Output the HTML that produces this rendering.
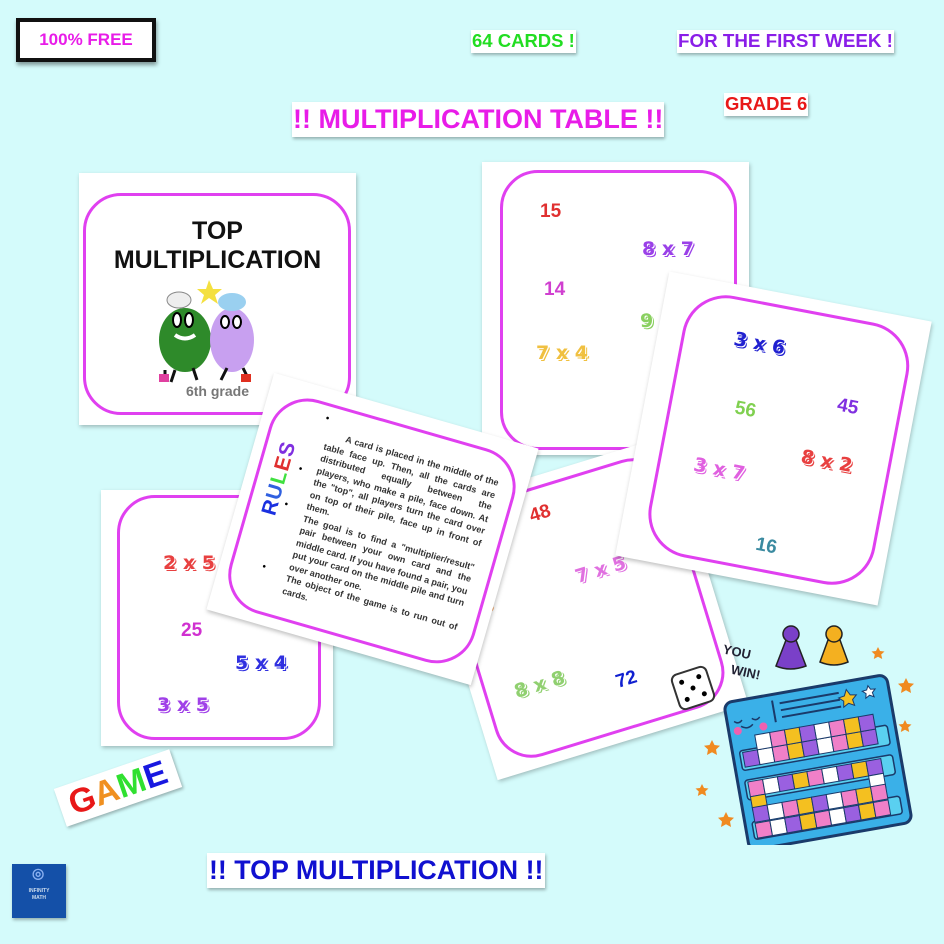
<!DOCTYPE html>
<html><head><meta charset="utf-8"><style>
*{margin:0;padding:0;box-sizing:border-box}
body{width:944px;height:944px;background:#d4fbfb;position:relative;overflow:hidden;font-family:"Liberation Sans",sans-serif}
.a{position:absolute}
.lbl{position:absolute;background:#fff;font-weight:bold;box-shadow:1px 2px 3px rgba(0,0,0,.3);white-space:nowrap;line-height:1}
.card{position:absolute;background:#fff;box-shadow:1px 2px 4px rgba(0,0,0,.25)}
.in{position:absolute;border:3.5px solid #e040f0;border-radius:38px}
.n{position:absolute;font-weight:bold;font-size:19px;white-space:nowrap;line-height:1}
.o{font-family:"DejaVu Sans",sans-serif;font-weight:bold;color:var(--c);text-shadow:1px 1px 0 #fff,2px 2px 0 var(--c)}
</style></head><body>

<div class="a" style="left:16px;top:18px;width:140px;height:44px;border:4px solid #111;background:#fff;box-shadow:1px 3px 4px rgba(0,0,0,.4);color:#e81ce8;font-weight:bold;font-size:17px;text-align:center;line-height:36px">100% FREE</div>
<div class="lbl" style="left:471px;top:30px;padding:2px 1px;font-size:18.5px;color:#22dd22">64 CARDS !</div>
<div class="lbl" style="left:677px;top:30px;padding:2px 1px;font-size:18.8px;color:#8a1ee8">FOR THE FIRST WEEK !</div>
<div class="lbl" style="left:724px;top:93px;padding:2px 1px;font-size:18.5px;color:#e81818">GRADE 6</div>
<div class="lbl" style="left:292px;top:102px;padding:4px 1px;font-size:27px;color:#e81ce8">!! MULTIPLICATION TABLE !!</div>

<!-- top-left card -->
<div class="card" style="left:79px;top:173px;width:277px;height:252px">
 <div class="in" style="left:4px;top:20px;width:268px;height:222px"></div>
 <div class="a" style="left:0;top:44px;width:277px;text-align:center;font-weight:bold;font-size:25px;line-height:29px;color:#111">TOP<br>MULTIPLICATION</div>
 <svg class="a" style="left:78px;top:107px" width="120" height="105" viewBox="0 0 120 105">
  <path d="M52 0 L56 9 L65 9 L58 15 L61 24 L52 18 L44 24 L47 15 L40 9 L49 9Z" fill="#f4e040"/>
  <ellipse cx="28" cy="60" rx="26" ry="32" fill="#2e8a2a"/>
  <ellipse cx="75" cy="60" rx="22" ry="32" fill="#c8a0f0"/>
  <ellipse cx="22" cy="20" rx="12" ry="8" fill="#eee" stroke="#888"/>
  <ellipse cx="75" cy="22" rx="14" ry="9" fill="#9ad0f0"/>
  <ellipse cx="20" cy="40" rx="4" ry="7" fill="#fff" stroke="#000" stroke-width="2"/>
  <ellipse cx="32" cy="40" rx="4" ry="7" fill="#fff" stroke="#000" stroke-width="2"/>
  <ellipse cx="68" cy="42" rx="4" ry="6" fill="#fff" stroke="#000" stroke-width="2"/>
  <ellipse cx="80" cy="42" rx="4" ry="6" fill="#fff" stroke="#000" stroke-width="2"/>
  <path d="M18 55 Q28 62 38 55" stroke="#fff" stroke-width="4" fill="none"/>
  <path d="M8 90 l0 12 M18 90 l-4 12 M36 88 l4 12 M70 88 l-6 12 M86 88 l6 12" stroke="#111" stroke-width="3"/>
  <rect x="2" y="94" width="10" height="8" fill="#e040a0"/><rect x="84" y="94" width="10" height="8" fill="#e03020"/>
 </svg>
 <div class="a" style="left:0;top:210px;width:277px;text-align:center;font-weight:bold;font-size:14px;color:#777">6th grade</div>
</div>

<!-- top-right card -->
<div class="card" style="left:482px;top:162px;width:267px;height:293px">
 <div class="in" style="left:18px;top:8px;width:237px;height:280px"></div>
 <div class="n" style="left:58px;top:40px;color:#e03030">15</div>
 <div class="n o" style="left:160px;top:78px;--c:#9a40e8">8 x 7</div>
 <div class="n" style="left:62px;top:118px;color:#d040d0">14</div>
 <div class="n o" style="left:158px;top:150px;--c:#8ad060">9</div>
 <div class="n o" style="left:54px;top:182px;--c:#f0c040">7 x 4</div>
</div>

<!-- bottom-left card -->
<div class="card" style="left:101px;top:490px;width:232px;height:256px">
 <div class="in" style="left:16px;top:5px;width:204px;height:245px"></div>
 <div class="n o" style="left:62px;top:64px;--c:#e84040">2 x 5</div>
 <div class="n" style="left:80px;top:131px;color:#d030d0">25</div>
 <div class="n o" style="left:134px;top:164px;--c:#3030e0">5 x 4</div>
 <div class="n o" style="left:56px;top:206px;--c:#a040e8">3 x 5</div>
</div>

<!-- bottom-middle card -->
<div class="card" style="left:451px;top:468px;width:262px;height:280px;transform:rotate(-17deg)">
 <div class="in" style="left:12px;top:10px;width:238px;height:260px"></div>
 <div class="n" style="left:108px;top:28px;color:#e03030">48</div>
 <div class="n o" style="left:14px;top:100px;--c:#f09040">x 3</div>
 <div class="n o" style="left:134px;top:100px;--c:#e070e0">7 x 5</div>
 <div class="n o" style="left:42px;top:192px;--c:#90d070">8 x 8</div>
 <div class="n" style="left:142px;top:212px;color:#1020d0">72</div>
</div>

<!-- right tilted card -->
<div class="card" style="left:640px;top:294px;width:267px;height:289px;transform:rotate(10.8deg)">
 <div class="in" style="left:24px;top:12px;width:230px;height:266px;border-radius:44px"></div>
 <div class="n o" style="left:76px;top:45px;--c:#2020d0">3 x 6</div>
 <div class="n" style="left:190px;top:90px;color:#8030e0">45</div>
 <div class="n" style="left:90px;top:112px;color:#80d050">56</div>
 <div class="n o" style="left:164px;top:148px;--c:#e84040">8 x 2</div>
 <div class="n o" style="left:60px;top:176px;--c:#e060e0">3 x 7</div>
 <div class="n" style="left:136px;top:242px;color:#3a8aa0">16</div>
</div>

<!-- rules card -->
<div class="card" style="left:235px;top:406px;width:275px;height:246px;transform:rotate(16deg)">
 <div class="in" style="left:10px;top:14px;width:255px;height:222px;border-radius:40px"></div>
 <div class="a" style="left:-4px;top:88px;transform:rotate(-90deg);font-weight:bold;font-size:21px;letter-spacing:1px"><span style="color:#1a30e0">R</span><span style="color:#3060e0">U</span><span style="color:#40e040">L</span><span style="color:#e03030">E</span><span style="color:#8030e0">S</span></div>
 <div class="a" style="left:62px;top:24px;font-size:10px;color:#000">•</div>
 <div class="a" style="left:50px;top:80px;font-size:10px;color:#000">•</div>
 <div class="a" style="left:46px;top:118px;font-size:10px;color:#000">•</div>
 <div class="a" style="left:42px;top:184px;font-size:10px;color:#000">•</div>
 <div class="a" style="left:68px;top:38px;width:178px;font-size:9px;font-weight:bold;color:#333;line-height:12.5px;text-align:justify">&nbsp;&nbsp;&nbsp;&nbsp;&nbsp;&nbsp;A card is placed in the middle of the table face up. Then, all the cards are distributed &nbsp;equally &nbsp;between &nbsp;the players, who make a pile, face down. At the "top", all players turn the card over on top of their pile, face up in front of them.<br>The goal is to find a "multiplier/result" pair between your own card and the middle card. If you have found a pair, you put your card on the middle pile and turn over another one.<br>The object of the game is to run out of cards.</div>
</div>

<!-- game board art -->
<svg class="a" style="left:660px;top:615px" width="284" height="230" viewBox="660 615 284 230">
 <g transform="rotate(-18 693 688)"><rect x="675" y="670" width="36" height="36" rx="6" fill="#fff" stroke="#333" stroke-width="2"/>
 <circle cx="684" cy="679" r="2.5"/><circle cx="702" cy="697" r="2.5"/><circle cx="693" cy="688" r="2.5"/><circle cx="702" cy="679" r="2.5"/><circle cx="684" cy="697" r="2.5"/></g>
 <text x="722" y="656" font-family="Liberation Sans" font-weight="bold" font-size="13" fill="#223" transform="rotate(12 735 656)">YOU</text>
 <text x="730" y="676" font-family="Liberation Sans" font-weight="bold" font-size="13" fill="#223" transform="rotate(12 742 676)">WIN!</text>
 <path d="M786 640 L776 666 Q790 672 806 666 L796 640Z" fill="#7a40c8" stroke="#222" stroke-width="1.5"/><circle cx="791" cy="634" r="8" fill="#7a40c8" stroke="#222" stroke-width="1.5"/>
 <path d="M828 640 L820 662 Q834 668 848 662 L840 640Z" fill="#f4b020" stroke="#222" stroke-width="1.5"/><circle cx="834" cy="634" r="8" fill="#f4b020" stroke="#222" stroke-width="1.5"/>
 <g fill="#f08a20">
  <path d="M878 647l2 4 4.5.5-3.3 3 1 4.5-4.2-2.3-4.2 2.3 1-4.5-3.3-3 4.5-.5z"/>
  <path d="M906 678l2.5 5 5.5.7-4 3.8 1 5.5-5-2.7-5 2.7 1-5.5-4-3.8 5.5-.7z"/>
  <path d="M905 720l2 4 4.5.5-3.3 3 1 4.5-4.2-2.3-4.2 2.3 1-4.5-3.3-3 4.5-.5z"/>
  <path d="M712 740l2.5 5 5.5.7-4 3.8 1 5.5-5-2.7-5 2.7 1-5.5-4-3.8 5.5-.7z"/>
  <path d="M702 784l2 4 4.5.5-3.3 3 1 4.5-4.2-2.3-4.2 2.3 1-4.5-3.3-3 4.5-.5z"/>
  <path d="M726 812l2.5 5 5.5.7-4 3.8 1 5.5-5-2.7-5 2.7 1-5.5-4-3.8 5.5-.7z"/>
 </g>
 <g transform="rotate(-10 815 760)">
  <rect x="735" y="688" width="165" height="150" rx="8" fill="#3ab0e8" stroke="#1a3a6a" stroke-width="3"/>
  <path d="M790 698 h60 M790 705 h60 M790 712 h60 M783 694 v22" stroke="#1a3a6a" stroke-width="2"/>
  <path d="M858 696l3 6 6 1-4.5 4 1 6-5.5-3-5.5 3 1-6-4.5-4 6-1z" fill="#f4c020" stroke="#1a3a6a"/>
  <path d="M880 696l2 4 4.5.5-3.3 3 1 4.5-4.2-2.3-4.2 2.3 1-4.5-3.3-3 4.5-.5z" fill="#fff" stroke="#1a3a6a"/>
  <path d="M742 708 q4 4 8 0 M760 708 q4 4 8 0 M748 714 q6 5 12 0" stroke="#1a3a6a" stroke-width="1.5" fill="none"/>
  <circle cx="744" cy="718" r="4" fill="#f060b0"/><circle cx="770" cy="718" r="4" fill="#f060b0"/>
  <rect x="742" y="738" width="150" height="20" rx="3" fill="#5ad0f0" stroke="#1a3a6a" stroke-width="1.5"/>
  <rect x="742" y="768" width="150" height="20" rx="3" fill="#5ad0f0" stroke="#1a3a6a" stroke-width="1.5"/>
  <rect x="742" y="810" width="150" height="18" rx="3" fill="#5ad0f0" stroke="#1a3a6a" stroke-width="1.5"/>
  <g stroke="#1a3a6a" stroke-width="1">
   <rect x="745" y="740" width="15" height="15" fill="#9a60e0"/><rect x="760" y="740" width="15" height="15" fill="#fff"/><rect x="775" y="740" width="15" height="15" fill="#f080c8"/><rect x="790" y="740" width="15" height="15" fill="#f4c020"/><rect x="805" y="740" width="15" height="15" fill="#9a60e0"/><rect x="820" y="740" width="15" height="15" fill="#fff"/><rect x="835" y="740" width="15" height="15" fill="#f080c8"/><rect x="850" y="740" width="15" height="15" fill="#f4c020"/><rect x="865" y="740" width="15" height="15" fill="#9a60e0"/>
   <rect x="865" y="725" width="15" height="15" fill="#9a60e0"/><rect x="850" y="725" width="15" height="15" fill="#f4c020"/><rect x="835" y="725" width="15" height="15" fill="#f080c8"/><rect x="820" y="725" width="15" height="15" fill="#fff"/><rect x="805" y="725" width="15" height="15" fill="#9a60e0"/><rect x="790" y="725" width="15" height="15" fill="#f4c020"/><rect x="775" y="725" width="15" height="15" fill="#f080c8"/><rect x="760" y="725" width="15" height="15" fill="#fff"/>
   <rect x="745" y="770" width="15" height="15" fill="#f080c8"/><rect x="760" y="770" width="15" height="15" fill="#fff"/><rect x="775" y="770" width="15" height="15" fill="#9a60e0"/><rect x="790" y="770" width="15" height="15" fill="#f4c020"/><rect x="805" y="770" width="15" height="15" fill="#f080c8"/><rect x="820" y="770" width="15" height="15" fill="#fff"/><rect x="835" y="770" width="15" height="15" fill="#9a60e0"/><rect x="850" y="770" width="15" height="15" fill="#f4c020"/><rect x="865" y="770" width="15" height="15" fill="#9a60e0"/>
   <rect x="745" y="785" width="15" height="15" fill="#f4c020"/><rect x="865" y="785" width="15" height="15" fill="#fff"/>
   <rect x="745" y="796" width="15" height="15" fill="#9a60e0"/><rect x="760" y="796" width="15" height="15" fill="#fff"/><rect x="775" y="796" width="15" height="15" fill="#f080c8"/><rect x="790" y="796" width="15" height="15" fill="#f4c020"/><rect x="805" y="796" width="15" height="15" fill="#9a60e0"/><rect x="820" y="796" width="15" height="15" fill="#fff"/><rect x="835" y="796" width="15" height="15" fill="#f080c8"/><rect x="850" y="796" width="15" height="15" fill="#f4c020"/><rect x="865" y="796" width="15" height="15" fill="#f080c8"/>
   <rect x="745" y="812" width="15" height="15" fill="#f080c8"/><rect x="760" y="812" width="15" height="15" fill="#fff"/><rect x="775" y="812" width="15" height="15" fill="#9a60e0"/><rect x="790" y="812" width="15" height="15" fill="#f4c020"/><rect x="805" y="812" width="15" height="15" fill="#f080c8"/><rect x="820" y="812" width="15" height="15" fill="#fff"/><rect x="835" y="812" width="15" height="15" fill="#9a60e0"/><rect x="850" y="812" width="15" height="15" fill="#f4c020"/><rect x="865" y="812" width="15" height="15" fill="#f080c8"/>
  </g>
 </g>
</svg>

<div class="a" style="left:57px;top:768px;width:122px;height:40px;background:#fff;transform:rotate(-19deg);box-shadow:1px 2px 3px rgba(0,0,0,.3);font-weight:bold;font-size:34px;line-height:40px;text-align:center"><span style="color:#e81818">G</span><span style="color:#f09020">A</span><span style="color:#30e030">M</span><span style="color:#1818e0">E</span></div>

<div class="a" style="left:12px;top:864px;width:54px;height:54px;background:#1450a8;box-shadow:1px 2px 3px rgba(0,0,0,.3);color:#cde;font-size:5px;font-weight:bold;text-align:center;padding-top:24px;line-height:7px"><span style="position:absolute;left:20px;top:6px;font-size:14px;color:#8ab0f0">◎</span>INFINITY<br>MATH</div>

<div class="lbl" style="left:207px;top:853px;padding:4px 2px;font-size:26.8px;color:#1010d0">!! TOP MULTIPLICATION !!</div>
</body></html>
